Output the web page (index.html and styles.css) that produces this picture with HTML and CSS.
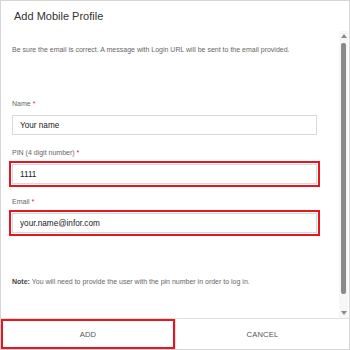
FILE: index.html
```html
<!DOCTYPE html>
<html>
<head>
    <title>Add Mobile Profile</title>
    <link rel="stylesheet" href="styles.css">
</head>
<body>
    <div class="dialog">
        <div class="dialog-header">
            <h2 class="dialog-title">Add Mobile Profile</h2>
        </div>

        <div class="dialog-body">
            <div class="body-content">
                <p class="intro">Be sure the email is correct. A message with Login URL will be sent to the email provided.</p>

                <div class="field field-first">
                    <label class="field-label">Name <span class="req">*</span></label>
                    <input class="field-input" type="text" value="Your name">
                </div>

                <div class="field">
                    <label class="field-label">PIN (4 digit number) <span class="req">*</span></label>
                    <input class="field-input marked" type="text" value="1111">
                </div>

                <div class="field">
                    <label class="field-label">Email <span class="req">*</span></label>
                    <input class="field-input marked" type="text" value="your.name@infor.com">
                </div>

                <p class="note"><strong>Note:</strong> You will need to provide the user with the pin number in order to log in.</p>
            </div>

            <!-- scroll track -->
            <div class="scrollbar">
                <span class="arrow arrow-up"></span>
                <span class="thumb"></span>
                <span class="arrow arrow-down"></span>
            </div>
        </div>

        <div class="dialog-footer">
            <button class="btn btn-marked">ADD</button>
            <button class="btn">CANCEL</button>
        </div>
    </div>
</body>
</html>
```

FILE: styles.css
```css
body {
    margin: 0;
    font-family: "Liberation Sans", Arial, sans-serif;
    background: #fff;
}

.dialog {
    width: 350px;
    height: 350px;
    box-sizing: border-box;
    border: 1px solid #d6d6d6;
    display: flex;
    flex-direction: column;
    background: #fff;
}

.dialog-header {
    height: 30px;
    padding-left: 13px;
    display: flex;
    align-items: center;
}

.dialog-title {
    margin: 0;
    font-size: 11px;
    font-weight: normal;
    color: #333;
}

.dialog-body {
    flex: 1;
    display: flex;
    min-height: 0;
}

.body-content {
    flex: 1;
    padding: 14px 22px 0 11px;
}

.intro {
    margin: 0;
    font-size: 7px;
    line-height: 10px;
    color: #666;
}

.field {
    margin-top: 13px;
}

.field-first {
    margin-top: 44px;
}

.field-label {
    display: block;
    font-size: 7px;
    line-height: 10px;
    color: #666;
    margin-bottom: 6px;
}

.req {
    color: #d8202f;
}

.field-input {
    display: block;
    width: 100%;
    height: 20px;
    box-sizing: border-box;
    margin: 0;
    border: 1px solid #d9d9d9;
    padding: 0 7px;
    font-family: inherit;
    font-size: 8.2px;
    color: #222;
    background: #fff;
}

.field-input.marked {
    outline: 2px solid #e8141e;
    outline-offset: 1px;
}

.note {
    margin: 44px 0 0;
    font-size: 7px;
    line-height: 10px;
    color: #666;
}

.note strong {
    color: #444;
}

.scrollbar {
    width: 9px;
    margin-right: 1px;
    background: #f7f7f7;
    display: flex;
    flex-direction: column;
    align-items: center;
    padding: 3px 0 3px;
}

.arrow {
    width: 0;
    height: 0;
    border-left: 3px solid transparent;
    border-right: 3px solid transparent;
}

.arrow-up {
    border-bottom: 4px solid #8a8a8a;
}

.arrow-down {
    border-top: 4px solid #8a8a8a;
    margin-top: auto;
}

.thumb {
    width: 5px;
    height: 251px;
    margin-top: 5px;
    border-radius: 2px;
    background: #8a8a8a;
}

.dialog-footer {
    height: 30px;
    display: grid;
    grid-template-columns: 1fr 1fr;
    border-top: 1px solid #e2e2e2;
}

.btn {
    border: none;
    background: #fff;
    font-family: inherit;
    font-size: 7.6px;
    color: #555;
    letter-spacing: 0.2px;
    cursor: pointer;
}

.btn + .btn {
    border-left: 1px solid #e2e2e2;
}

.btn-marked {
    outline: 2px solid #e8141e;
    outline-offset: -2px;
}
```
